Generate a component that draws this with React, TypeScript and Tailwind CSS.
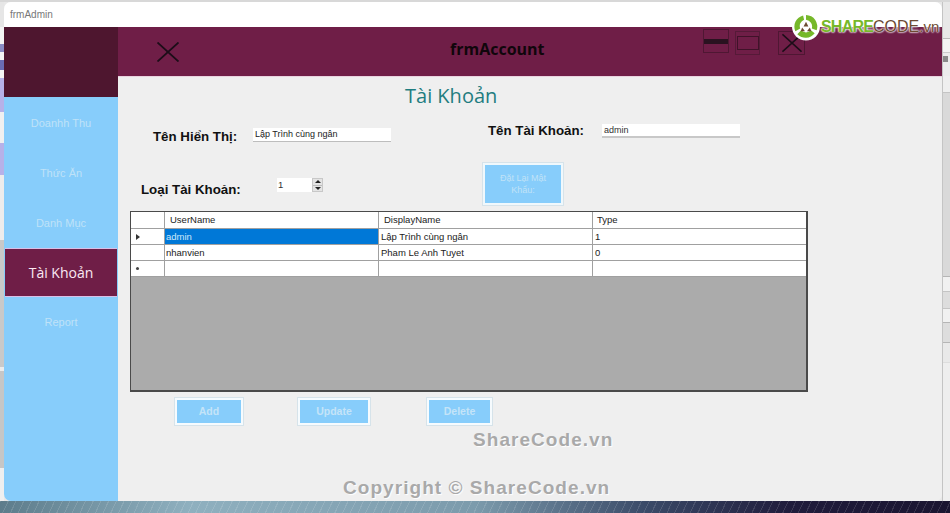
import React from 'react';

const uiFont = "font-['Open_Sans','Noto_Sans',sans-serif]";
const arial = "font-['Liberation_Sans',Arial,sans-serif]";

const navItems = ['Doanhh Thu', 'Thức Ăn', 'Danh Mục', 'Tài Khoản', 'Report'];

const rows = [
    { marker: 'arrow', user: 'admin', name: 'Lập Trình cùng ngân', type: '1', selected: true },
    { marker: '', user: 'nhanvien', name: 'Pham Le Anh Tuyet', type: '0', selected: false },
    { marker: 'star', user: '', name: '', type: '', selected: false },
];

const leftStrip = [
    { h: 'h-[25px]', c: 'bg-[#e6e6e6]' },
    { h: 'h-[17px]', c: 'bg-[#f4f4f4]' },
    { h: 'h-[8px]', c: 'bg-[#8a8cc4]' },
    { h: 'h-[8px]', c: 'bg-[#f4f4f4]' },
    { h: 'h-[10px]', c: 'bg-[#6a6cb4]' },
    { h: 'h-[8px]', c: 'bg-[#f4f4f4]' },
    { h: 'h-[34px]', c: 'bg-[#b6b1e8]' },
    { h: 'h-[31px]', c: 'bg-[#f0f0f0]' },
    { h: 'h-[32px]', c: 'bg-[#b6b1e8]' },
    { h: 'h-[65px]', c: 'bg-[#ececec]' },
    { h: 'h-[127px]', c: 'bg-[#c9c9c9]' },
    { h: 'h-[4px]', c: 'bg-[#ececec]' },
    { h: 'h-[97px]', c: 'bg-[#c6c6c6]' },
    { h: 'h-[33px]', c: 'bg-[#efefef]' },
];

const rightStrip = [
    { h: 'h-[36px]', c: 'bg-[#e8e8e8]' },
    { h: 'h-[14px]', c: 'bg-[#f4f4f4] border-t border-[#bbbbbb]' },
    { h: 'h-[24px]', c: 'bg-[#ececec] border-t border-[#cccccc]' },
    { h: 'h-[16px]', c: 'bg-[#efefef]' },
    { h: 'h-[184px]', c: 'bg-[#d9d9d9] border-t border-[#c4c4c4]' },
    { h: 'h-[15px]', c: 'bg-[#f1f1f1] border-t border-[#b5b5b5]' },
    { h: 'h-[17px]', c: 'bg-[#dddddd] border-t border-[#c4c4c4]' },
    { h: 'h-[14px]', c: 'bg-[#f1f1f1] border-t border-[#c4c4c4]' },
    { h: 'h-[20px]', c: 'bg-[#dddddd] border-t border-[#b5b5b5]' },
    { h: 'h-[20px]', c: 'bg-[#e9e9e9] border-t border-[#b5b5b5]' },
    { h: 'h-[139px]', c: 'bg-[#eeeeee] border-t border-[#dddddd]' },
];

const CrossIcon = ({ className }: { className: string }) => (
    <svg viewBox="0 0 22 20" className={className} fill="none" stroke="#1c0d18" strokeWidth="1.8">
        <path d="M0.5 0.5 L21.5 19.5 M21.5 0.5 L0.5 19.5" />
    </svg>
);

const ActionButton = ({ label, className }: { label: string; className: string }) => (
    <button className={`${className} ${arial} shrink-0 bg-[#87cdfb] border-2 border-[#f6fbfe] shadow-[0_0_0_1px_#d6e3ea] text-[10.5px] text-[#c4e4f8] font-bold`}>
        {label}
    </button>
);

export default function App() {
    return (
        <div className="w-[950px] h-[513px] overflow-hidden flex flex-col bg-[#e8e8e8]">
            <div className="h-[2px] shrink-0 bg-[#d8d8d8]" />
            <div className="flex h-[499px] shrink-0 overflow-hidden">
                {/* desktop behind the window, left */}
                <div className="w-[4px] shrink-0 flex flex-col">
                    {leftStrip.map((s, i) => (
                        <div key={i} className={`${s.h} ${s.c} shrink-0`} />
                    ))}
                </div>

                {/* frmAdmin window */}
                <div className="w-[938px] shrink-0 flex flex-col rounded-t-[7px] rounded-b-[7px] overflow-hidden bg-[#efefef] relative">
                    <div className={`h-[25px] shrink-0 bg-white flex items-center pl-[6px] text-[10px] text-[#777777] ${arial}`}>
                        frmAdmin
                    </div>

                    <div className="flex flex-1 min-h-0">
                        {/* side menu */}
                        <div className="w-[114px] shrink-0 flex flex-col bg-[#87cdfb]">
                            <div className="h-[70px] shrink-0 bg-[#4e162f]" />
                            {navItems.map((item) =>
                                item === 'Tài Khoản' ? (
                                    <div key={item} className={`h-[49px] mt-[1px] shrink-0 ml-[1px] mr-[1px] bg-[#6f1e47] border-y border-[#d9bfe6] flex items-center justify-center text-[14px] text-[#fbe9f3] ${uiFont}`}>
                                        {item}
                                    </div>
                                ) : (
                                    <div key={item} className={`h-[50px] shrink-0 flex items-center justify-center text-[11px] text-[#bfe2f8] ${item === 'Report' ? '' : 'pt-[2px]'} ${arial}`}>
                                        {item}
                                    </div>
                                )
                            )}
                        </div>

                        <div className="flex-1 min-w-0 flex flex-col">
                            {/* header bar */}
                            <div className="h-[49px] shrink-0 bg-[#6f1e47] flex items-start relative">
                                <CrossIcon className="w-[22px] h-[20px] ml-[39px] mt-[15px] shrink-0" />
                                <div className={`ml-[271px] mt-[11px] w-[96px] text-[16px] leading-[22px] font-bold whitespace-nowrap text-[#10060b] ${uiFont}`}>
                                    frmAccount
                                </div>
                                <div className="ml-[157px] mt-[2px] w-[26px] h-[24px] shrink-0 border border-[#4f1733] flex items-center">
                                    <div className="w-full h-[5px] bg-[#2a1220]" />
                                </div>
                                <div className="ml-[6px] mt-[4px] w-[25px] h-[24px] shrink-0 border border-[#561a38] flex items-center justify-center">
                                    <div className="w-[22px] h-[14px] border border-[#401229]" />
                                </div>
                                <div className="ml-[18px] mt-[4px] w-[27px] h-[24px] shrink-0 border border-[#4f1733] flex items-center justify-center">
                                    <CrossIcon className="w-[20px] h-[20px]" />
                                </div>
                            </div>
                            <div className="h-[1px] shrink-0 bg-[#e9d3df]" />

                            {/* page body */}
                            <div className="flex-1 min-h-0 flex flex-col bg-[#efefef]">
                                <div className={`h-[38px] shrink-0 ml-[287px] flex items-center text-[20px] text-[#1f7d80] ${uiFont}`}>
                                    Tài Khoản
                                </div>

                                <div className="h-[96px] shrink-0 flex">
                                    <div className="w-[365px] shrink-0 flex flex-col">
                                        <div className="flex items-start pt-[13px] h-[50px]">
                                            <span className={`ml-[35px] w-[100px] text-[13.3px] leading-[17px] font-bold text-[#111111] whitespace-nowrap ${arial}`}>
                                                Tên Hiển Thị:
                                            </span>
                                            <div className={`w-[138px] h-[14px] bg-white border-b border-[#bdbdbd] pl-[2px] text-[9px] leading-[13px] text-[#222222] whitespace-nowrap ${arial}`}>
                                                Lập Trình cùng ngân
                                            </div>
                                        </div>
                                        <div className="flex items-start">
                                            <span className={`ml-[23px] mt-[16px] w-[136px] text-[13.3px] leading-[17px] font-bold text-[#111111] whitespace-nowrap ${arial}`}>
                                                Loại Tài Khoản:
                                            </span>
                                            <div className={`mt-[13px] w-[46px] h-[14px] bg-white flex ${arial}`}>
                                                <span className="flex-1 pl-[1px] text-[9.5px] leading-[13px] text-[#333333]">1</span>
                                                <div className="w-[11px] h-full flex flex-col bg-[#e4e4e4] border border-[#c8c8c8]">
                                                    <div className="flex-1 flex items-center justify-center border-b border-[#bcbcbc]">
                                                        <div className="w-0 h-0 border-x-[3px] border-x-transparent border-b-[3px] border-b-[#222222]" />
                                                    </div>
                                                    <div className="flex-1 flex items-center justify-center">
                                                        <div className="w-0 h-0 border-x-[3px] border-x-transparent border-t-[3px] border-t-[#222222]" />
                                                    </div>
                                                </div>
                                            </div>
                                        </div>
                                    </div>

                                    <div className="flex-1 min-w-0 flex flex-col">
                                        <div className="flex items-start pt-[7px] h-[48px]">
                                            <span className={`ml-[5px] w-[114px] text-[13.3px] leading-[17px] font-bold text-[#111111] whitespace-nowrap ${arial}`}>
                                                Tên Tài Khoản:
                                            </span>
                                            <div className={`mt-[2px] w-[138px] h-[14px] bg-white border-b-2 border-[#c8c8c8] pl-[2px] text-[9px] leading-[13px] text-[#333333] ${arial}`}>
                                                admin
                                            </div>
                                        </div>
                                        <button className={`w-[80px] h-[42px] shrink-0 bg-[#87cdfb] border-2 border-[#f0f8fc] shadow-[0_0_0_1px_#d6e3ea] text-[9px] leading-[12px] text-[#c0e2f7] px-[10px] ${arial}`}>
                                            Đặt Lại Mật Khẩu:
                                        </button>
                                    </div>
                                </div>

                                {/* accounts grid */}
                                <div className={`ml-[12px] w-[678px] h-[181px] shrink-0 border border-[#4a4a4a] border-r-2 border-b-2 bg-[#ababab] flex flex-col ${arial}`}>
                                    <div className="h-[17px] shrink-0 bg-white border-b border-[#a0a0a0] flex text-[9.5px] leading-[16px] text-[#222222]">
                                        <div className="w-[34px] shrink-0 border-r border-[#a0a0a0]" />
                                        <div className="w-[214px] shrink-0 border-r border-[#a0a0a0] pl-[5px]">UserName</div>
                                        <div className="w-[214px] shrink-0 border-r border-[#a0a0a0] pl-[5px]">DisplayName</div>
                                        <div className="flex-1 pl-[4px]">Type</div>
                                    </div>
                                    {rows.map((row, i) => (
                                        <div key={i} className="h-[16px] shrink-0 bg-white border-b border-[#a0a0a0] flex text-[9.5px] leading-[15px] text-[#222222]">
                                            <div className="w-[34px] shrink-0 border-r border-[#a0a0a0] flex items-center pl-[5px]">
                                                {row.marker === 'arrow' && (
                                                    <div className="w-0 h-0 border-y-[3px] border-y-transparent border-l-[4px] border-l-[#333333]" />
                                                )}
                                                {row.marker === 'star' && <div className="w-[3px] h-[3px] rounded-full bg-[#444444]" />}
                                            </div>
                                            <div className={`w-[214px] shrink-0 border-r border-[#a0a0a0] pl-[1px] ${row.selected ? 'bg-[#0078d7] text-[#cfe8fa]' : ''}`}>
                                                {row.user}
                                            </div>
                                            <div className="w-[214px] shrink-0 border-r border-[#a0a0a0] pl-[2px]">{row.name}</div>
                                            <div className="flex-1 pl-[2px]">{row.type}</div>
                                        </div>
                                    ))}
                                </div>

                                {/* grid actions */}
                                <div className="flex items-start mt-[6px]">
                                    <ActionButton label="Add" className="ml-[57px] w-[68px] h-[27px]" />
                                    <ActionButton label="Update" className="ml-[55px] w-[72px] h-[27px]" />
                                    <ActionButton label="Delete" className="ml-[57px] w-[65px] h-[27px]" />
                                </div>
                            </div>
                        </div>
                    </div>

                    {/* sharecode logo */}
                    <div className="absolute left-[787px] top-[10px] flex items-center">
                        <svg viewBox="0 0 30 30" className="w-[30px] h-[29px] shrink-0">
                            <circle cx="15" cy="15" r="14.5" fill="#ffffff" />
                            <path d="M15 3 A12 12 0 0 1 26 19 L21 17 A7 7 0 0 0 15 8 Z" fill="#76b82a" />
                            <path d="M24 22 A12 12 0 0 1 6 23 L10 19 A7 7 0 0 0 20 19 Z" fill="#76b82a" />
                            <path d="M4 20 A12 12 0 0 1 12 3.5 L13 8 A7 7 0 0 0 9 17 Z" fill="#76b82a" />
                            <path d="M15 10 L17.5 15 L12.5 15 Z" fill="#6d4a32" />
                            <path d="M11 16 L14 20 L9.5 20 Z" fill="#6d4a32" />
                            <path d="M19 16 L20.5 20 L16 20 Z" fill="#6d4a32" />
                        </svg>
                        <span className={`text-[16px] leading-[24px] whitespace-nowrap [text-shadow:0_0_2px_#ffffff,0_0_2px_#ffffff,0_0_2px_#ffffff] ${arial}`}>
                            <span className="font-bold text-[#76b82a] tracking-[-0.8px]">SHARE</span>
                            <span className="text-[#6d4a32]">CODE</span>
                            <span className="text-[#6d4a32] text-[15px]">.vn</span>
                        </span>
                    </div>

                    {/* watermarks */}
                    <div className={`absolute left-[469px] top-[426px] text-[19px] leading-[24px] font-bold tracking-[1.05px] text-[#a9a9a9] whitespace-nowrap [text-shadow:1px_1px_1px_#ffffff] ${arial}`}>
                        ShareCode.vn
                    </div>
                    <div className={`absolute left-[339px] top-[474px] text-[19px] leading-[24px] font-bold tracking-[1.05px] text-[#a9a9a9] whitespace-nowrap [text-shadow:1px_1px_1px_#ffffff] ${arial}`}>
                        Copyright © ShareCode.vn
                    </div>
                </div>

                {/* desktop behind the window, right */}
                <div className="w-[8px] shrink-0 flex flex-col border-l border-[#c4c4c4]">
                    {rightStrip.map((s, i) => (
                        <div key={i} className={`${s.h} ${s.c} shrink-0`}>
                            {i === 2 && <div className="w-[5px] h-[6px] mt-[3px] bg-[#8a8a8a]" />}
                        </div>
                    ))}
                </div>
            </div>

            {/* wallpaper below the window */}
            <div className="h-[12px] shrink-0 bg-[repeating-linear-gradient(115deg,rgba(255,255,255,0.12)_0_1px,transparent_1px_7px),linear-gradient(90deg,#5d7c8b_0%,#8fb0bf_20%,#7c9bac_50%,#3a4a68_68%,#201c3c_83%,#1a1530_100%)]" />
        </div>
    );
}
